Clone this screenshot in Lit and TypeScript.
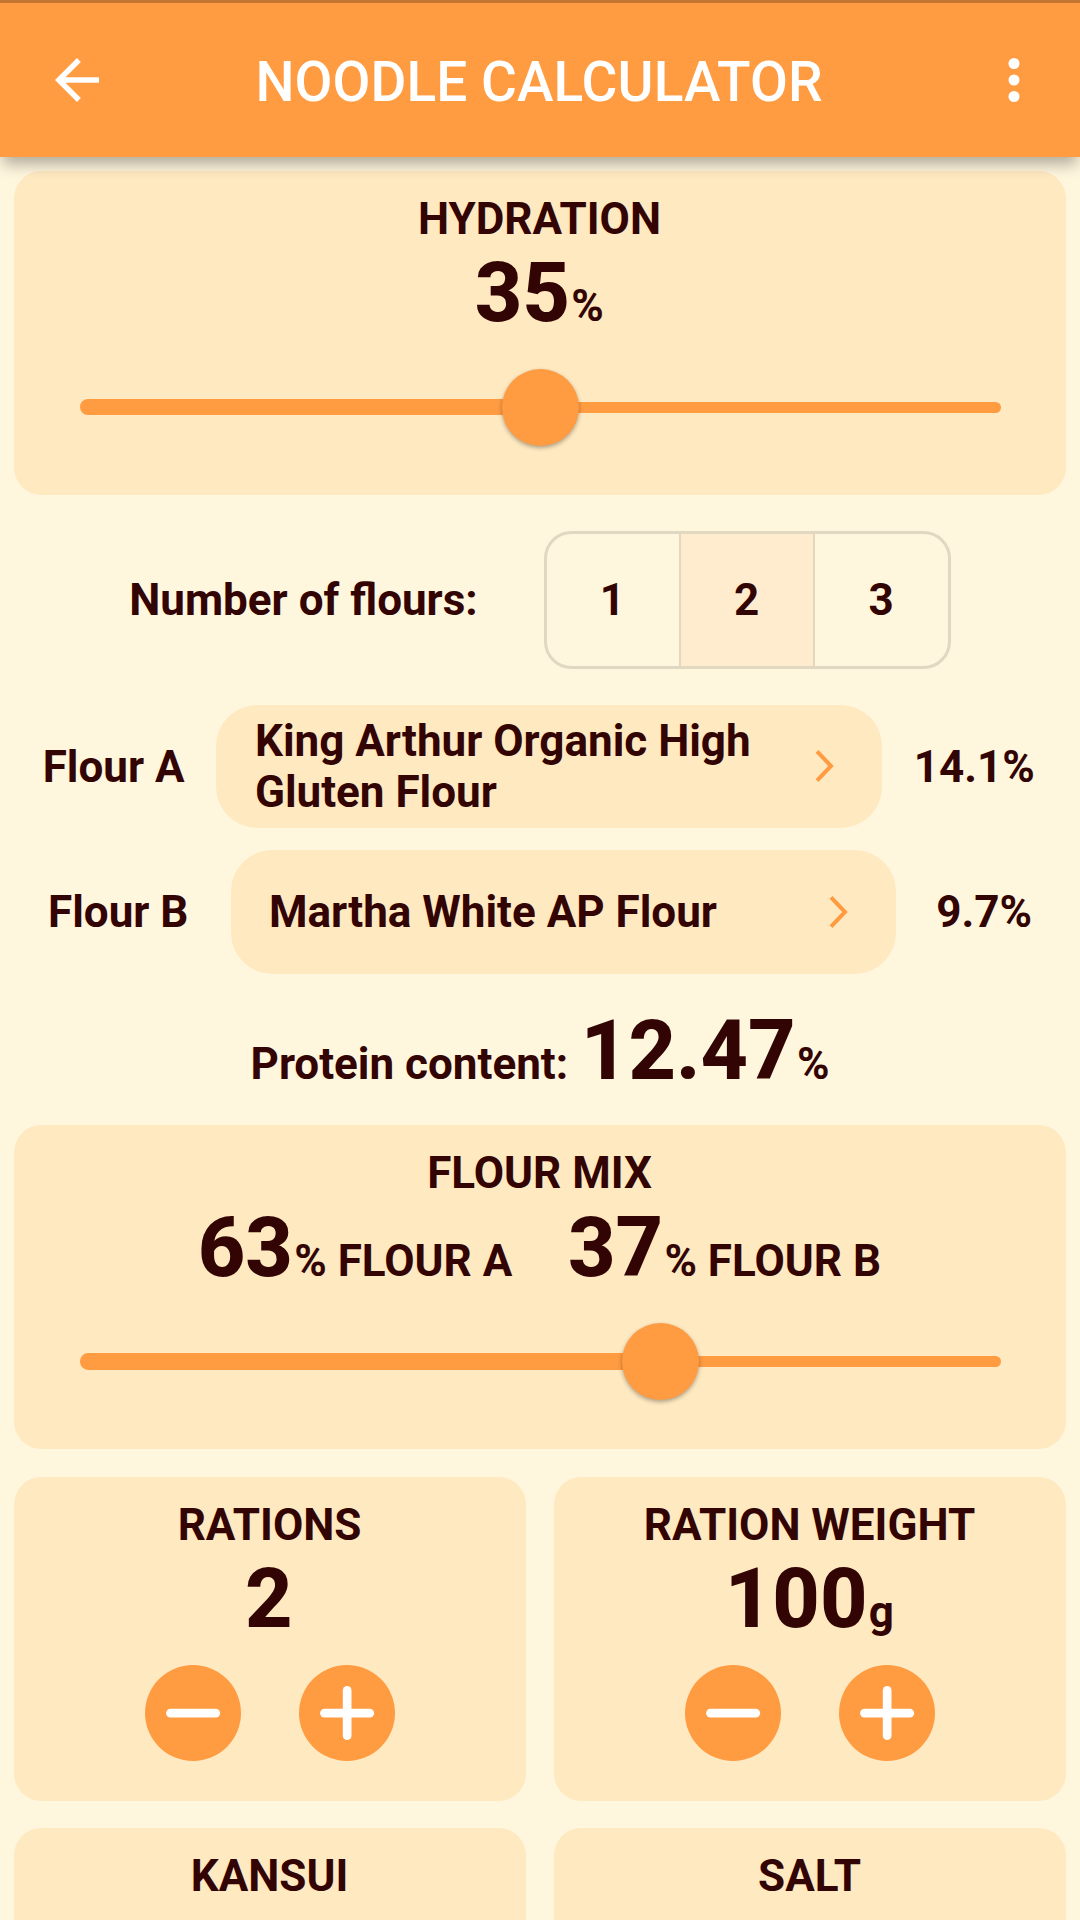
import { LitElement, html, css, svg, nothing } from "lit";
import { customElement, property, state } from "lit/decorators.js";
import { classMap } from "lit/directives/class-map.js";

@customElement("value-slider")
class ValueSlider extends LitElement {
  @property({ type: Number }) value = 50;

  static styles = css`
    :host {
      display: flex;
      align-items: center;
      height: 132px;
      margin-top: -1px;
      padding: 0 65.5px 0 66.25px;
    }
    .track {
      position: relative;
      display: flex;
      align-items: center;
      width: 100%;
    }
    .active {
      height: 16.5px;
      border-radius: 8.25px 0 0 8.25px;
      background: #ff9b41;
    }
    .inactive {
      flex: 1;
      height: 11px;
      border-radius: 0 5.5px 5.5px 0;
      background: #ff9b41;
    }
    .thumb {
      position: absolute;
      top: 50%;
      width: 77px;
      height: 77px;
      margin: -38.5px 0 0 -38.5px;
      border-radius: 50%;
      background: #ff9b41;
      box-shadow: 0 2px 4px rgba(0, 0, 0, 0.32);
    }
  `;

  render() {
    return html`
      <div class="track">
        <div class="active" style="width:${this.value}%"></div>
        <div class="inactive"></div>
        <div class="thumb" style="left:${this.value}%"></div>
      </div>
    `;
  }
}

@customElement("value-stepper")
class ValueStepper extends LitElement {
  static styles = css`
    :host {
      display: flex;
      align-items: center;
      justify-content: center;
      gap: 57.75px;
      height: 132px;
      margin-top: -1px;
    }
    .button {
      display: block;
      width: 96.25px;
      height: 96.25px;
      padding: 0;
      border: 0;
      border-radius: 50%;
      background: #ff9b41;
    }
    .icon {
      display: block;
      width: 100%;
      height: 100%;
      fill: #fff;
    }
  `;

  render() {
    const bar = svg`<rect x="21.1" y="43.8" width="54" height="8.7" rx="4.35"/>`;
    return html`
      <button class="button" aria-label="Decrease">
        <svg class="icon" viewBox="0 0 96.25 96.25">${bar}</svg>
      </button>
      <button class="button" aria-label="Increase">
        <svg class="icon" viewBox="0 0 96.25 96.25">
          ${bar}<rect x="43.8" y="21.1" width="8.7" height="54" rx="4.35" />
        </svg>
      </button>
    `;
  }
}

@customElement("app-root")
class AppRoot extends LitElement {
  @state() private flourCount = 2;
  @state() private flours = [
    { label: "Flour A", name: "King Arthur Organic High Gluten Flour", protein: "14.1%" },
    { label: "Flour B", name: "Martha White AP Flour", protein: "9.7%" },
  ];

  static styles = css`
    :host {
      display: flex;
      flex-direction: column;
      box-sizing: border-box;
      width: 1080px;
      height: 1920px;
      overflow: hidden;
      background: #fff6de;
      color: #320504;
      font: 700 44px/51.6px Roboto, sans-serif;
    }
    .bar {
      position: relative;
      z-index: 1;
      flex: none;
      display: flex;
      align-items: center;
      justify-content: space-between;
      box-sizing: border-box;
      height: 157px;
      padding: 0 33px 0 44px;
      border-top: 3px solid #c27631;
      background: #ff9b41;
      color: #fff;
      box-shadow: 0 10px 14px -3px rgba(0, 0, 0, 0.31);
    }
    .bar-icon {
      width: 66px;
      height: 66px;
      fill: #fff;
    }
    .title {
      margin: 0;
      padding: 3px 13px 0 0;
      font-size: 55px;
      font-weight: 500;
      line-height: 64px;
      letter-spacing: 0.07px;
    }
    .content {
      flex: none;
      display: flex;
      flex-direction: column;
      padding: 13.75px 13.75px 0;
    }
    .card {
      box-sizing: border-box;
      height: 324.25px;
      padding-top: 23px;
      border-radius: 27.5px;
      background: #ffe9c1;
      text-align: center;
    }
    .card-title {
      height: 51.6px;
      margin-left: -1px;
    }
    .reading {
      display: flex;
      align-items: baseline;
      justify-content: center;
      height: 96.7px;
    }
    .reading.mix {
      gap: 57px;
    }
    .group {
      display: flex;
      align-items: baseline;
      white-space: pre;
    }
    .big {
      margin: 0 1.3px 0 -1.3px;
      font-size: 82.5px;
      font-weight: 800;
      line-height: 96.7px;
    }
    .count {
      display: flex;
      align-items: center;
      justify-content: center;
      gap: 66px;
      padding: 36px 0;
    }
    .text {
      padding-top: 2px;
    }
    .toggle {
      display: flex;
      box-sizing: border-box;
      width: 407px;
      height: 137.5px;
      border: 3px solid #e1d8c1;
      border-radius: 27.5px;
      overflow: hidden;
    }
    .option {
      flex: 1;
      display: flex;
      align-items: center;
      justify-content: center;
      padding: 3px 1px 0 0;
    }
    .option + .option {
      border-left: 2px solid #e1d8c1;
    }
    .option.selected {
      background: #ffebcd;
    }
    .flours {
      display: flex;
      flex-direction: column;
      gap: 22px;
    }
    .flour {
      display: flex;
      align-items: center;
      justify-content: space-around;
      padding: 0 13.75px;
    }
    .flour:first-child {
      padding: 0 15.5px 0 13px;
    }
    .flour:last-child .picker {
      margin: 0 -1px 0 1px;
    }
    .picker {
      display: flex;
      align-items: center;
      justify-content: space-between;
      box-sizing: border-box;
      width: 665.5px;
      height: 123.75px;
      padding: 0 47px 0 38.5px;
      border-radius: 41.25px;
      background: #ffe9c1;
    }
    .name {
      width: 520px;
    }
    .chevron {
      flex: none;
      width: 20px;
      height: 34px;
      fill: none;
      stroke: #ff9b41;
      stroke-width: 4;
    }
    .protein {
      display: flex;
      align-items: baseline;
      justify-content: center;
      gap: 14px;
      height: 96.7px;
      margin: 29px 0 25.3px;
    }
    .pair {
      display: grid;
      grid-template-columns: 1fr 1fr;
      gap: 27.5px;
      margin-top: 27.5px;
    }
  `;

  private amountCard(title: string, amount = "", unit = "") {
    return html`
      <section class="card">
        <div class="card-title">${title}</div>
        ${amount
          ? html`<div class="reading">
                <span class="big">${amount}</span><span>${unit}</span>
              </div>
              <value-stepper></value-stepper>`
          : nothing}
      </section>
    `;
  }

  render() {
    return html`
      <header class="bar">
        <svg class="bar-icon" viewBox="0 0 24 24">
          <path d="M20 11H7.83l5.59-5.59L12 4l-8 8 8 8 1.41-1.41L7.83 13H20v-2z" />
        </svg>
        <h1 class="title">NOODLE CALCULATOR</h1>
        <svg class="bar-icon" viewBox="0 0 24 24">
          <circle cx="12" cy="6" r="2" />
          <circle cx="12" cy="12" r="2" />
          <circle cx="12" cy="18" r="2" />
        </svg>
      </header>
      <main class="content">
        <section class="card">
          <div class="card-title">HYDRATION</div>
          <div class="reading"><span class="big">35</span><span>%</span></div>
          <value-slider .value=${50}></value-slider>
        </section>

        <div class="count">
          <span class="text">Number of flours:</span>
          <div class="toggle">
            ${[1, 2, 3].map(
              (n) => html`<div
                class=${classMap({ option: true, selected: n === this.flourCount })}
                @click=${() => (this.flourCount = n)}
              >${n}</div>`
            )}
          </div>
        </div>

        <div class="flours">
          ${this.flours.map(
            (f) => html`
              <div class="flour">
                <span class="text">${f.label}</span>
                <div class="picker">
                  <span class="name text">${f.name}</span>
                  <svg class="chevron" viewBox="0 0 20 34"><path d="M2 2.4L16 17L2 31.6" /></svg>
                </div>
                <span class="text">${f.protein}</span>
              </div>
            `
          )}
        </div>

        <div class="protein">
          <span>Protein content:</span>
          <span class="group"><span class="big">12.47</span><span>%</span></span>
        </div>

        <section class="card">
          <div class="card-title">FLOUR MIX</div>
          <div class="reading mix">
            <span class="group"><span class="big">63</span><span>% FLOUR A</span></span>
            <span class="group"><span class="big">37</span><span>% FLOUR B</span></span>
          </div>
          <value-slider .value=${63}></value-slider>
        </section>

        <div class="pair">
          ${this.amountCard("RATIONS", "2")} ${this.amountCard("RATION WEIGHT", "100", "g")}
        </div>
        <div class="pair">${this.amountCard("KANSUI")} ${this.amountCard("SALT")}</div>
      </main>
    `;
  }
}
